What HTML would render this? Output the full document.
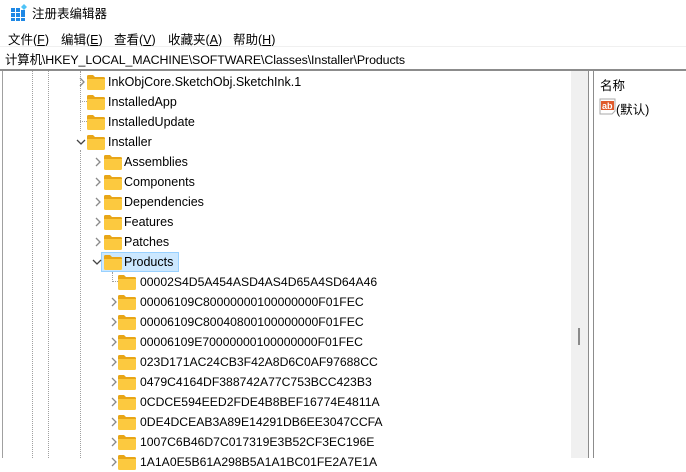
<!DOCTYPE html>
<html><head><meta charset="utf-8"><style>
*{margin:0;padding:0;box-sizing:border-box}
body{width:686px;height:458px;overflow:hidden;background:#fff;font-family:"Liberation Sans","Noto Sans CJK SC",sans-serif;font-size:12px;color:#000;position:relative}
.a{position:absolute;white-space:nowrap}
.t{font-size:12.5px;line-height:20px;height:20px}
.f{position:absolute;width:18px;height:15px}
.sel{position:absolute;left:101px;top:252px;width:78px;height:20px;background:#cce8ff;border:1px solid #99d1ff}
.vd{position:absolute;width:1px;border-left:1px dotted #a0a0a0}
.hd{position:absolute;height:1px;border-top:1px dotted #a0a0a0}
</style></head><body>
<svg class="a" style="left:10px;top:4px" width="18" height="18" viewBox="0 0 18 18">
<g fill="#1e88e5"><rect x="1" y="4" width="4" height="4"/><rect x="6" y="4" width="4" height="4"/><rect x="11" y="6" width="4" height="3"/>
<rect x="1" y="9" width="4" height="4"/><rect x="6" y="9" width="4" height="4"/><rect x="11" y="9" width="4" height="4"/>
<rect x="1" y="14" width="4" height="3"/><rect x="6" y="14" width="4" height="3"/><rect x="11" y="14" width="4" height="3"/></g>
<path d="M14 0 L17 3 L14 6 L11 3Z" fill="#4fc3f7"/></svg>
<div class="a" style="left:32px;top:3px;font-size:12.5px">注册表编辑器</div>
<div class="a" style="left:8px;top:29px;font-size:12.5px">文件(<u>F</u>)</div>
<div class="a" style="left:61px;top:29px;font-size:12.5px">编辑(<u>E</u>)</div>
<div class="a" style="left:114px;top:29px;font-size:12.5px">查看(<u>V</u>)</div>
<div class="a" style="left:168px;top:29px;font-size:12.5px">收藏夹(<u>A</u>)</div>
<div class="a" style="left:233px;top:29px;font-size:12.5px">帮助(<u>H</u>)</div>
<div class="a" style="left:0;top:46px;width:686px;height:1px;background:#f0f0f0"></div>
<div class="a" style="left:5px;top:50px;font-size:12.4px;letter-spacing:-0.1px">计算机\HKEY_LOCAL_MACHINE\SOFTWARE\Classes\Installer\Products</div>
<div class="a" style="left:0;top:69px;width:686px;height:2px;background:#8c8c8c"></div>
<div class="a" style="left:2px;top:71px;width:1px;height:387px;background:#a0a0a0"></div>
<div class="vd" style="left:32px;top:71px;height:387px"></div>
<div class="vd" style="left:48px;top:71px;height:387px"></div>
<div class="vd" style="left:80px;top:71px;height:60px"></div>
<div class="hd" style="left:80px;top:101px;width:7px"></div>
<div class="hd" style="left:80px;top:121px;width:7px"></div>
<div class="vd" style="left:80px;top:150px;height:308px"></div>
<div class="vd" style="left:112px;top:272px;height:10px"></div>
<div class="hd" style="left:112px;top:281px;width:6px"></div>
<div class="sel"></div>
<div id="tree"></div>
<div class="a" style="left:571px;top:71px;width:17px;height:387px;background:#f0f0f0"></div>
<div class="a" style="left:578px;top:328px;width:2px;height:17px;background:#8a8a8a"></div>
<div class="a" style="left:588px;top:71px;width:1px;height:387px;background:#8c8c8c"></div>
<div class="a" style="left:593px;top:71px;width:1px;height:387px;background:#8c8c8c"></div>
<div class="a" style="left:600px;top:75px;font-size:12.5px">名称</div>
<svg class="a" style="left:599px;top:98px" width="17" height="17" viewBox="0 0 17 17"><path d="M1 1H16V13L13 16H1Z" fill="#fff" stroke="#aaa"/><rect x="2" y="3" width="13" height="9" fill="#e05a2b"/><text x="3" y="11" font-size="9" font-weight="bold" fill="#fff" font-family="Liberation Sans">ab</text></svg>
<div class="a" style="left:616px;top:99px;font-size:12.5px">(默认)</div>
<script>
var rows=[
["InkObjCore.SketchObj.SketchInk.1",0,">"],["InstalledApp",0,""],["InstalledUpdate",0,""],["Installer",0,"v"],
["Assemblies",1,">"],["Components",1,">"],["Dependencies",1,">"],["Features",1,">"],["Patches",1,">"],["Products",1,"v"],
["00002S4D5A454ASD4AS4D65A4SD64A46",2,""],["00006109C80000000100000000F01FEC",2,">"],["00006109C80040800100000000F01FEC",2,">"],
["00006109E70000000100000000F01FEC",2,">"],["023D171AC24CB3F42A8D6C0AF97688CC",2,">"],["0479C4164DF388742A77C753BCC423B3",2,">"],
["0CDCE594EED2FDE4B8BEF16774E4811A",2,">"],["0DE4DCEAB3A89E14291DB6EE3047CCFA",2,">"],["1007C6B46D7C017319E3B52CF3EC196E",2,">"],["1A1A0E5B61A298B5A1A1BC01FE2A7E1A",2,">"]];
var fx=[87,104,118],tx=[108,124,140],ax=[78,94,110],h="";
rows.forEach(function(r,i){var y=71+i*20,l=r[1];
if(r[2]==">")h+='<svg class="a" style="left:'+ax[l]+'px;top:'+(y+6)+'px" width="8" height="10"><polyline points="2,1 6,5 2,9" fill="none" stroke="#8a8a8a" stroke-width="1.3"/></svg>';
if(r[2]=="v")h+='<svg class="a" style="left:'+(ax[l]-2)+'px;top:'+(y+7)+'px" width="10" height="8"><polyline points="1,2 5,6 9,2" fill="none" stroke="#444" stroke-width="1.3"/></svg>';
h+='<svg class="f" style="left:'+fx[l]+'px;top:'+(y+4)+'px" viewBox="0 0 18 15"><path d="M0 1.5Q0 0 1.5 0H6L8 2H16.5Q18 2 18 3.5V5H0Z" fill="#e8a617"/><path d="M0 4H18V13.5Q18 15 16.5 15H1.5Q0 15 0 13.5Z" fill="#fcc93f"/></svg>';
var fs=l==2?'font-size:12.2px;':'';
h+='<div class="a t" style="'+fs+'left:'+tx[l]+'px;top:'+(y+1)+'px">'+r[0]+'</div>';});
document.getElementById("tree").innerHTML=h;
</script>
</body></html>
